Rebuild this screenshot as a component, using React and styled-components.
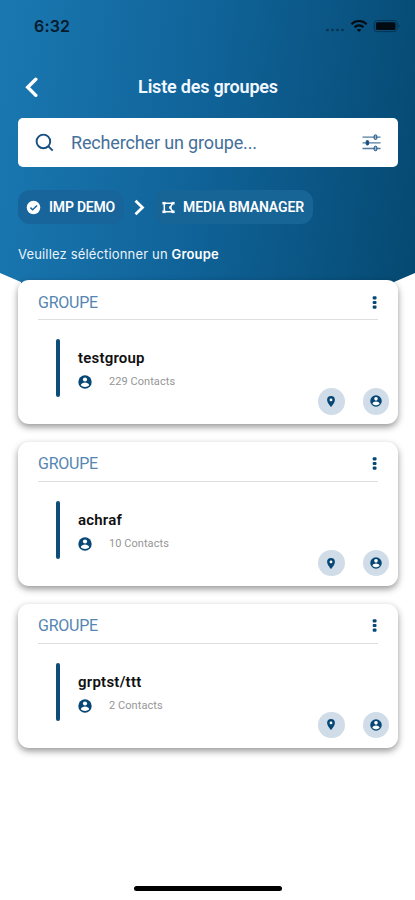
import styled, { createGlobalStyle } from 'styled-components'

const GlobalStyle = createGlobalStyle`
  *, *::before, *::after { box-sizing: border-box; }

  body {
    margin: 0;
    background: #fff;
    font-family: Roboto, "Liberation Sans", sans-serif;
  }
`

const Screen = styled.main`
  display: flex;
  flex-direction: column;
  width: 415px;
  height: 900px;
  overflow: hidden;
  background: #fff;
`

// The lower edge slopes down from both sides towards the first card
const Header = styled.header`
  flex: none;
  height: 284px;
  padding: 0 17px 0 18px;
  background: linear-gradient(97deg, #1a77b0 3%, #10649a 46%, #084f7b 88%, #044970 100%);
  clip-path: polygon(0 0, 100% 0, 100% 273px, 394px 282px, 394px 284px, 21px 284px, 21px 282px, 0 273px);
`

const StatusBar = styled.div`
  display: flex;
  align-items: center;
  justify-content: space-between;
  height: 52px;
  padding-left: 16px;
`

const Clock = styled.time`
  font-family: Inter, sans-serif;
  font-size: 16px;
  font-weight: 600;
  letter-spacing: 0.2px;
  color: #061a2b;
`

const StatusIcons = styled.div`
  display: flex;
  align-items: center;
  gap: 5px;
  margin-right: -3px;
  color: #020a12;
`

const NavBar = styled.div`
  display: grid;
  grid-template-columns: 28px 1fr 28px;
  align-items: center;
  height: 40px;
  margin-top: 15px;
`

const BackButton = styled.button`
  display: flex;
  padding: 0 0 0 6px;
  border: 0;
  background: none;
  color: #fff;
`

const Title = styled.h1`
  margin: 0;
  font-size: 18px;
  font-weight: 600;
  letter-spacing: -0.2px;
  line-height: 24px;
  text-align: center;
  color: #f2f8ff;
`

const SearchBox = styled.div`
  display: flex;
  align-items: center;
  height: 49px;
  margin-top: 11px;
  padding: 0 17px;
  border-radius: 5px;
  background: #fff;
  color: #174f80;
`

const Placeholder = styled.span`
  flex: 1;
  margin-left: 17px;
  font-size: 18px;
  letter-spacing: -0.15px;
  color: #447099;
`

const Breadcrumb = styled.nav`
  display: flex;
  align-items: center;
  height: 34px;
  margin-top: 23px;
  color: #fff;
`

const Chip = styled.span`
  display: flex;
  align-items: center;
  gap: 8px;
  width: ${({ $width }) => $width}px;
  height: 34px;
  padding-left: 8px;
  border-radius: 12px;
  background: ${({ $background }) => $background};
  font-size: 14px;
  font-weight: 600;
  letter-spacing: ${({ $spacing }) => $spacing}px;
  white-space: nowrap;

  svg { flex: none; }
`

const Separator = styled.span`
  display: flex;
  justify-content: center;
  width: 30px;
`

const Hint = styled.p`
  margin: 22px 0 0;
  font-family: Inter, sans-serif;
  font-size: 13px;
  line-height: 16px;
  letter-spacing: 0.16px;
  color: #e8f4fb;

  strong { color: #fff; font-weight: 600; }
`

const GroupList = styled.section`
  display: flex;
  flex-direction: column;
  gap: 17.8px;
  margin-top: -4px;
  padding: 0 17px 0 18px;
  position: relative;
`

const Card = styled.article`
  display: flex;
  flex-direction: column;
  height: 144px;
  border-radius: 11px;
  background: #fff;
  box-shadow: 0 3px 7px rgba(0, 0, 0, 0.42);
`

const CardHeader = styled.div`
  display: flex;
  align-items: center;
  justify-content: space-between;
  height: 40px;
  margin: 0 20px;
  padding-top: 5px;
  border-bottom: 1px solid #dedede;
`

const CardLabel = styled.span`
  font-size: 16px;
  letter-spacing: -0.25px;
  color: #5586b1;
`

const MenuButton = styled.button`
  display: flex;
  padding: 0;
  margin-right: 1px;
  border: 0;
  background: none;
  color: #064775;
`

const CardBody = styled.div`
  display: flex;
  margin: 19px 0 0 38px;
`

const Accent = styled.span`
  width: 4px;
  height: 58px;
  border-radius: 2px;
  background: #0c4e78;
`

const GroupInfo = styled.div`
  margin-left: 18px;
  padding-top: 9px;
`

const GroupName = styled.h2`
  margin: 0;
  font-size: 15px;
  font-weight: 600;
  line-height: 20px;
  letter-spacing: ${({ $spacing }) => $spacing}px;
  color: #101010;
`

const Contacts = styled.div`
  display: flex;
  align-items: center;
  gap: 17px;
  margin-top: 7px;
  font-size: 11px;
  line-height: 14px;
  letter-spacing: 0.06px;
  color: #969696;

  svg { color: #064775; margin-left: -0.5px; margin-right: 0.5px; }
`

const CardActions = styled.div`
  display: flex;
  justify-content: flex-end;
  gap: 18px;
  margin: -9px 9px 0 0;
`

const RoundButton = styled.button`
  display: flex;
  align-items: center;
  justify-content: center;
  width: 26.5px;
  height: 26.5px;
  padding: 0;
  border: 0;
  border-radius: 50%;
  background: #d0dde8;
  color: #064775;
`

const HomeIndicator = styled.div`
  width: 148px;
  height: 5px;
  margin: auto auto 9px 134px;
  border-radius: 3px;
  background: #000;
`

const groups = [
  { name: 'testgroup', contacts: 229, spacing: 0.2 },
  { name: 'achraf', contacts: 10, spacing: 0.2 },
  { name: 'grptst/ttt', contacts: 2, spacing: 0.25 },
]

const Account = ({ size }) => (
  <svg width={size} height={size} viewBox="0 0 14 14">
    <circle cx="7" cy="7" r="6.7" fill="currentColor" />
    <circle cx="7" cy="4.5" r="2.1" fill="#fff" />
    <path d="M2.8 10.2C3 8.4 5.5 7.6 7 7.6s4 .8 4.2 2.6C9 12.5 5 12.5 2.8 10.2Z" fill="#fff" />
  </svg>
)

const Pin = () => (
  <svg width="8" height="11" viewBox="0 0 8 11">
    <path d="M4 0a3.9 3.9 0 0 1 3.9 3.9C7.9 6.6 4 11 4 11S.1 6.6.1 3.9A3.9 3.9 0 0 1 4 0Z" fill="currentColor" />
    <circle cx="4" cy="3.9" r="1.4" fill="#fff" />
  </svg>
)

const Dots = () => (
  <svg width="5" height="13" viewBox="0 0 5 13" fill="currentColor">
    <rect x=".7" y=".2" width="3.8" height="3.2" rx="1" />
    <rect x=".7" y="4.9" width="3.8" height="3.2" rx="1" />
    <rect x=".7" y="9.6" width="3.8" height="3.2" rx="1" />
  </svg>
)

const SignalDots = () => (
  <svg width="20" height="18" viewBox="0 0 20 18" fill="#04334f">
    <circle cx="2.5" cy="13" r="1.3" />
    <circle cx="7.5" cy="13" r="1.3" />
    <circle cx="12.5" cy="13" r="1.3" />
    <circle cx="17.5" cy="13" r="1.3" />
  </svg>
)

const Wifi = () => (
  <svg width="18" height="14" viewBox="0 0 18 14" fill="none" stroke="currentColor" strokeWidth="2.1">
    <path d="M1.4 5.2c4.2-4.2 11-4.2 15.2 0" />
    <path d="M4.5 8.2c2.5-2.4 6.5-2.4 9 0" />
    <path d="M9 13 6.7 10.7c1.2-1.1 3.4-1.1 4.6 0Z" fill="currentColor" stroke="none" />
  </svg>
)

const Battery = () => (
  <svg width="28" height="14" viewBox="0 0 28 14">
    <rect x="1.2" y="1.6" width="23" height="11" rx="3" fill="none" stroke="#043452" />
    <rect x="2.9" y="3.2" width="19.6" height="7.8" rx="1.5" fill="currentColor" />
    <path d="M25.5 5.3c1.5.4 1.5 3.2 0 3.6Z" fill="#043452" />
  </svg>
)

const Back = () => (
  <svg width="14" height="20" viewBox="0 0 14 20" fill="none" stroke="currentColor" strokeWidth="3.4">
    <path d="M11.8 2.2 3.7 10.3l8.1 8.1" strokeLinecap="round" />
  </svg>
)

const Search = () => (
  <svg width="19" height="19" viewBox="0 0 19 19" fill="none" stroke="currentColor" strokeWidth="1.9">
    <circle cx="8.4" cy="8.4" r="6.8" />
    <path d="m13.2 13.2 4.5 4.5" />
  </svg>
)

const Tune = () => (
  <svg width="19" height="18" viewBox="0 0 19 18" fill="none" stroke="currentColor">
    <path d="M.5 3.2h18M.5 8.8h18M.5 14.5h18" strokeWidth="1.3" opacity=".75" />
    <rect x="12.2" y=".9" width="2.6" height="4.5" rx="1" fill="#9cb8d2" />
    <rect x="4.2" y="6.5" width="2.4" height="4.5" rx="1" fill="currentColor" />
    <rect x="12.2" y="12.2" width="2.6" height="4.5" rx="1" fill="#9cb8d2" />
  </svg>
)

const Check = () => (
  <svg width="15" height="15" viewBox="0 0 15 15">
    <circle cx="7.5" cy="7.5" r="6.8" fill="currentColor" />
    <path d="m4.4 7.6 2.3 2.2 4.3-4.3" fill="none" stroke="#1b6699" strokeWidth="1.5" />
  </svg>
)

const Chevron = () => (
  <svg width="11" height="17" viewBox="0 0 11 17" fill="none" stroke="currentColor" strokeWidth="2.8">
    <path d="m1.5 1.7 7 6.8-7 6.8" />
  </svg>
)

// Polygon outline with a square handle on each corner
const Area = () => (
  <svg width="13" height="13" viewBox="0 0 13 13" fill="currentColor">
    <path d="M2.3 2.2h8.4L8.2 6.5l2.5 4.3H2.3Z" fill="none" stroke="currentColor" strokeWidth="1.5" />
    <rect x=".4" y=".9" width="3.2" height="2.6" />
    <rect x="9.6" y=".9" width="3" height="2.6" />
    <rect x="7.2" y="5.3" width="2.2" height="2.4" />
    <rect x=".4" y="9.5" width="3.2" height="2.6" />
    <rect x="9.6" y="9.5" width="3" height="2.6" />
  </svg>
)

function GroupCard({ group }) {
  return (
    <Card>
      <CardHeader>
        <CardLabel>GROUPE</CardLabel>
        <MenuButton aria-label="Options"><Dots /></MenuButton>
      </CardHeader>
      <CardBody>
        <Accent />
        <GroupInfo>
          <GroupName $spacing={group.spacing}>{group.name}</GroupName>
          <Contacts>
            <Account size={14} />
            <span>{group.contacts} Contacts</span>
          </Contacts>
        </GroupInfo>
      </CardBody>
      <CardActions>
        <RoundButton aria-label="Carte"><Pin /></RoundButton>
        <RoundButton aria-label="Contacts"><Account size={12} /></RoundButton>
      </CardActions>
    </Card>
  )
}

function App() {
  return (
    <>
      <GlobalStyle />
      <Screen>
        <Header>
          <StatusBar>
            <Clock>6:32</Clock>
            <StatusIcons>
              <SignalDots />
              <Wifi />
              <Battery />
            </StatusIcons>
          </StatusBar>

          <NavBar>
            <BackButton aria-label="Retour"><Back /></BackButton>
            <Title>Liste des groupes</Title>
          </NavBar>

          <SearchBox>
            <Search />
            <Placeholder>Rechercher un groupe...</Placeholder>
            <Tune />
          </SearchBox>

          <Breadcrumb>
            <Chip $width={106} $background="#17659a" $spacing={-0.2}>
              <Check />
              IMP DEMO
            </Chip>
            <Separator><Chevron /></Separator>
            <Chip $width={159} $background="#176496" $spacing={-0.1}>
              <Area />
              MEDIA BMANAGER
            </Chip>
          </Breadcrumb>

          <Hint>Veuillez séléctionner un <strong>Groupe</strong></Hint>
        </Header>

        <GroupList>
          {groups.map(group => (
            <GroupCard key={group.name} group={group} />
          ))}
        </GroupList>

        <HomeIndicator />
      </Screen>
    </>
  )
}

export default App
